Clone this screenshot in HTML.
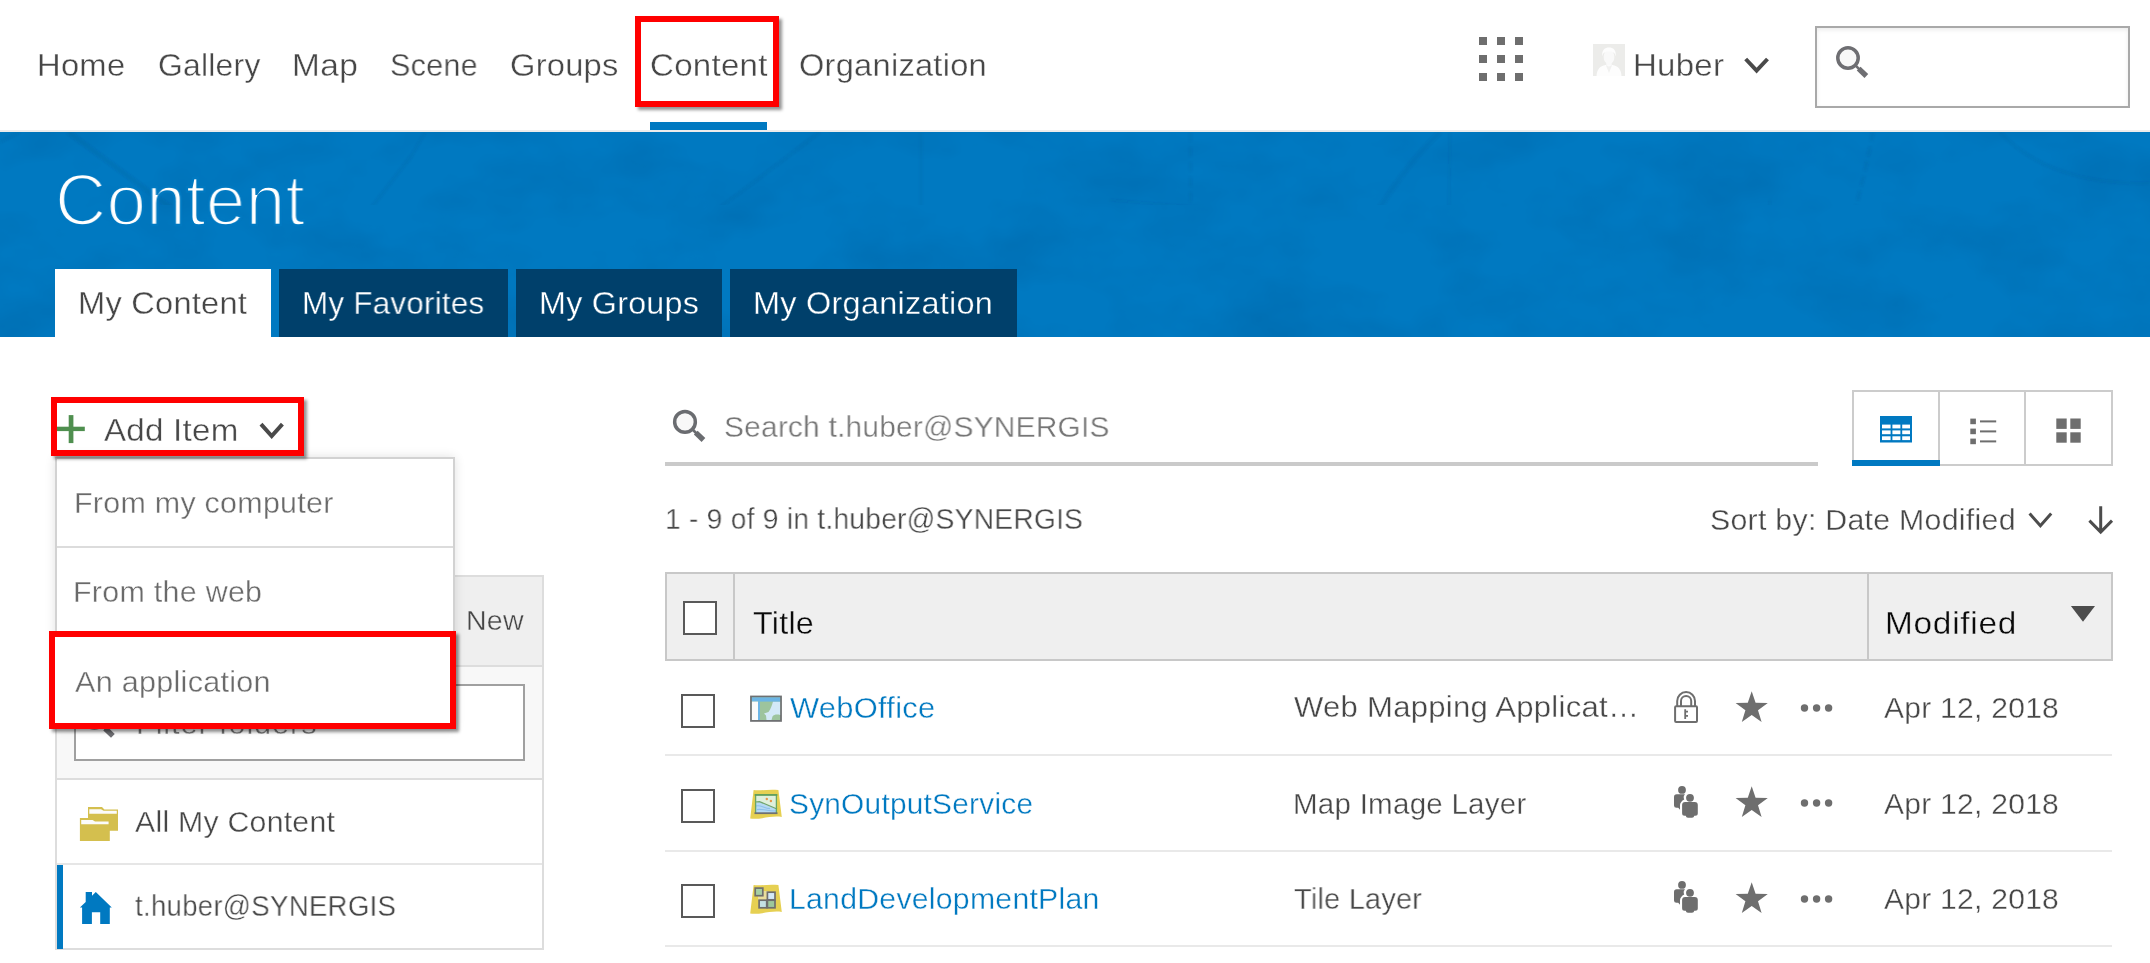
<!DOCTYPE html>
<html lang="en">
<head>
<meta charset="utf-8">
<title>Content</title>
<style>
html,body{margin:0;padding:0;}
body{width:2150px;height:963px;overflow:hidden;background:#fff;position:relative;
  font-family:"Liberation Sans",sans-serif;}
.a{position:absolute;box-sizing:border-box;}
.t{position:absolute;white-space:nowrap;line-height:0;transform-origin:0 0;will-change:transform;font-family:"Liberation Sans",sans-serif;}
svg{position:absolute;overflow:visible;}
/* header */
#hdrline{left:0;top:130px;width:2150px;height:2px;background:#ececec;}
#navul{left:650px;top:122px;width:117px;height:8px;background:#0079c1;}
.gd{width:8px;height:8px;background:#6e6e6e;}
#avatar{left:1593px;top:44px;width:32px;height:32px;background:#ececea;overflow:hidden;}
#gsearch{left:1815px;top:26px;width:315px;height:82px;border:2px solid #a9a9a9;background:#fff;
  box-shadow:inset 0 2px 4px rgba(0,0,0,.08);}
/* banner */
#banner{left:0;top:132px;width:2150px;height:205px;background:#0079c1;overflow:hidden;}
.tab{top:269px;height:68px;background:#00406b;}
#tab1{left:55px;width:216px;background:#fff;}
#tab2{left:279px;width:229px;}
#tab3{left:516px;width:206px;}
#tab4{left:730px;width:287px;}
/* red annotation boxes */
.red{border:6px solid #f00;box-shadow:3px 3px 3px rgba(0,0,0,.42);z-index:25;}
#red1{left:635px;top:16px;width:144px;height:91px;}
#red2{left:51px;top:397px;width:253px;height:59px;}
#red3{left:49px;top:631px;width:407px;height:98px;background:#fff;}
/* dropdown */
#dd{left:55px;top:457px;width:400px;height:272px;background:#fff;border:2px solid #d2d2d2;
  box-shadow:0 0 10px rgba(0,0,0,.12);z-index:20;}
.ddl{left:57px;width:396px;height:2px;background:#dcdcdc;z-index:21;}
/* folder panel */
#fp{left:55px;top:575px;width:489px;height:375px;border:2px solid #ddd;background:#fff;}
#fph{left:57px;top:577px;width:485px;height:90px;background:#efefef;border-bottom:2px solid #ddd;}
#fpf{left:57px;top:667px;width:485px;height:113px;background:#f8f8f8;border-bottom:2px solid #ddd;}
#finput{left:74px;top:684px;width:451px;height:77px;border:2px solid #a0a0a0;background:#fff;}
#fpd{left:57px;top:863px;width:485px;height:2px;background:#e6e6e6;}
#fpbar{left:57px;top:865px;width:6px;height:84px;background:#0079c1;}
/* search */
#sul{left:665px;top:462px;width:1153px;height:4px;background:#cacaca;}
#vs{left:1852px;top:390px;width:261px;height:76px;border:2px solid #ccc;background:#fff;}
.vsd{top:392px;width:2px;height:72px;background:#ccc;}
#vsa{left:1852px;top:460px;width:88px;height:6px;background:#0079c1;}
/* table */
#th{left:665px;top:572px;width:1448px;height:89px;background:#efefef;border:2px solid #c8c8c8;}
.thd{top:574px;width:2px;height:85px;background:#c8c8c8;}
.cb{width:34px;height:34px;border:2px solid #595959;background:#fff;}
.rl{left:665px;width:1447px;height:2px;background:#e9e9e9;}

</style>
</head>
<body>
<!-- ===== top navigation ===== -->
<div class="a" id="hdrline"></div>
<div class="a" id="navul"></div>
<div class="a gd" style="left:1479px;top:37px"></div><div class="a gd" style="left:1497px;top:37px"></div><div class="a gd" style="left:1515px;top:37px"></div>
<div class="a gd" style="left:1479px;top:55px"></div><div class="a gd" style="left:1497px;top:55px"></div><div class="a gd" style="left:1515px;top:55px"></div>
<div class="a gd" style="left:1479px;top:73px"></div><div class="a gd" style="left:1497px;top:73px"></div><div class="a gd" style="left:1515px;top:73px"></div>
<div class="a" id="avatar">
  <svg width="32" height="32" viewBox="0 0 32 32" style="left:0;top:0">
    <path d="M3.5 32 C4 25 7 22 12.5 21 L19.5 21 C25 22 28 25 28.5 32 Z" fill="#fdfdfd"/>
    <path d="M13.3 17 H18.7 V21.5 H13.3 Z" fill="#f9f9f9"/>
    <path d="M12.8 21 L16 29 L19.2 21 L16 22.4 Z" fill="#f1f1f0"/>
    <ellipse cx="16" cy="13" rx="5.4" ry="7" fill="#f9f9f9"/>
    <path d="M9.3 12.5 C8.5 6 12 3.6 16 3.6 C20 3.6 23.5 6 22.7 12.5 C22 9 20.5 7.6 16 7.6 C11.5 7.6 10 9 9.3 12.5 Z" fill="#fdfdfd"/>
  </svg>
</div>
<svg width="30" height="22" viewBox="1742 55 30 22" style="left:1742px;top:55px">
  <polyline points="1745.7,59 1756.6,70.6 1767.5,59" fill="none" stroke="#4a4a4a" stroke-width="4"/>
</svg>
<div class="a" id="gsearch"></div>
<svg width="40" height="40" viewBox="1832 42 40 40" style="left:1832px;top:42px">
  <circle cx="1848" cy="58" r="10.2" fill="#f8f8f8" stroke="#6e6e72" stroke-width="3.5"/>
  <line x1="1855.95" y1="65.95" x2="1859.45" y2="69.45" stroke="#6e6e72" stroke-width="2.6"/>
  <line x1="1858.65" y1="68.65" x2="1866.35" y2="76.05" stroke="#6e6e72" stroke-width="5.4"/>
</svg>

<!-- ===== banner ===== -->
<div class="a" id="banner">
  <svg width="2150" height="205" viewBox="0 132 2150 205" style="left:0;top:0">
    <defs><filter id="mottle" x="0" y="0" width="100%" height="100%" color-interpolation-filters="sRGB">
      <feTurbulence type="fractalNoise" baseFrequency="0.009 0.014" numOctaves="4" seed="11"/>
      <feColorMatrix type="matrix" values="0 0 0 0 0  0 0 0 0 0.22  0 0 0 0 0.42  0.3 0 0 0 -0.125"/>
    </filter><filter id="soft" x="0" y="0" width="100%" height="100%" filterUnits="userSpaceOnUse"><feGaussianBlur stdDeviation="1.3"/></filter></defs>
    <rect x="0" y="132" width="2150" height="205" filter="url(#mottle)"/>
    <g fill="none" stroke="#003f70" stroke-opacity=".09" stroke-width="3" filter="url(#soft)">
      <path d="M0 142 L20 132"/>
      <path d="M425 132 L412 155 L345 242 L318 269"/>
      <path d="M68 132 L254 269" stroke-opacity=".12" stroke-width="5"/>
      <path d="M445 219 C455 235 462 250 469 269"/>
      <path d="M820 132 L640 268"/>
      <path d="M921 132 V337"/>
      <path d="M1190.6 132 V337" stroke-dasharray="10 5"/>
      <path d="M1440 132 C1400 170 1372 220 1366 232 C1350 270 1342 300 1336 337" stroke-width="5"/>
      <path d="M1873 132 C1860 200 1840 270 1812 337" stroke-dasharray="10 5" stroke-width="4"/>
      <path d="M2000 132 C2030 165 2080 185 2150 183"/>
      <path d="M1110 200 C1300 215 1600 240 2150 285" stroke-width="2"/>
      <path d="M1450 132 L1447 337" stroke-width="2"/>
      <path d="M1770 200 L1760 337" stroke-width="2"/>
      <path d="M1340 290 C1500 300 1800 330 2150 337" stroke-width="2"/>
    </g>
  </svg>
</div>
<div class="a tab" id="tab1"></div>
<div class="a tab" id="tab2"></div>
<div class="a tab" id="tab3"></div>
<div class="a tab" id="tab4"></div>

<!-- ===== left column: folder panel (partly hidden behind dropdown) ===== -->
<div class="a" id="fp"></div>
<div class="a" id="fph"></div>
<div class="a" id="fpf"></div>
<div class="a" id="finput"></div>
<svg width="40" height="40" viewBox="78 702 40 40" style="left:78px;top:702px">
  <circle cx="94.4" cy="717.7" r="10.35" fill="#f8f8f8" stroke="#6e6e72" stroke-width="3.5"/>
  <line x1="102.46" y1="725.76" x2="105.96" y2="729.26" stroke="#6e6e72" stroke-width="2.6"/>
  <line x1="105.16" y1="728.46" x2="112.86" y2="735.86" stroke="#6e6e72" stroke-width="5.4"/>
</svg>
<div class="a" id="fpd"></div>
<div class="a" id="fpbar"></div>
<!-- folders icon -->
<svg width="42" height="36" viewBox="78 806 42 36" style="left:78px;top:806px">
  <path d="M88 807.1 H102 L104.4 809.5 H118 V830.8 H88 Z" fill="#d4bf4e"/>
  <path d="M89.3 809.3 H101 L103.6 810.7 H116.8 V813.7 H89.3 Z" fill="#fbfbfb"/>
  <path d="M79.9 818 H93.5 L95.5 820.4 H109.8 V840.9 H79.9 Z" fill="#d4bf4e"/>
  <path d="M81.2 820.1 H92.6 L95 821.5 H108.6 V824.3 H81.2 Z" fill="#fbfbfb"/>
</svg>
<!-- home icon -->
<svg width="36" height="36" viewBox="78 890 36 36" style="left:78px;top:890px">
  <path d="M95.8 892 L111.8 907.6 H109.8 V923.9 H100.2 V912.2 H91.9 V923.9 H82.1 V907.6 H79.9 L85.7 902 V892 H92 V895.8 Z" fill="#0079c1"/>
</svg>

<!-- ===== Add Item + dropdown ===== -->
<svg width="34" height="34" viewBox="54 412 34 34" style="left:54px;top:412px;z-index:24">
  <rect x="68.7" y="415.1" width="4.7" height="28" fill="#4f8f4f"/>
  <rect x="54" y="426.7" width="30.8" height="4.4" fill="#4f8f4f"/>
</svg>
<svg width="30" height="22" viewBox="257 420 30 22" style="left:257px;top:420px;z-index:24">
  <polyline points="261,424.2 271.7,436 282.4,424.2" fill="none" stroke="#4a4a4a" stroke-width="4"/>
</svg>
<div class="a" id="dd"></div>
<div class="a ddl" style="top:546px"></div>
<div class="a red" id="red1"></div>
<div class="a red" id="red2"></div>
<div class="a red" id="red3"></div>

<!-- ===== right column: search + view switcher ===== -->
<svg width="40" height="40" viewBox="670 407 40 40" style="left:670px;top:407px">
  <circle cx="685" cy="421.9" r="10.35" fill="#f8f8f8" stroke="#6a6c70" stroke-width="3.5"/>
  <line x1="693.06" y1="429.96" x2="696.56" y2="433.46" stroke="#6a6c70" stroke-width="2.6"/>
  <line x1="695.76" y1="432.66" x2="703.46" y2="440.06" stroke="#6a6c70" stroke-width="5.4"/>
</svg>
<div class="a" id="sul"></div>
<div class="a" id="vs"></div>
<div class="a vsd" style="left:1938px"></div>
<div class="a vsd" style="left:2024px"></div>
<div class="a" id="vsa"></div>
<!-- table-view icon -->
<svg width="32" height="27" viewBox="0 0 32 27" style="left:1880px;top:416px">
  <rect x="0" y="0" width="32" height="26.5" fill="#0079c1"/>
  <g fill="#fff">
    <rect x="2" y="8.6" width="8.6" height="3.8"/><rect x="12.4" y="8.6" width="8" height="3.8"/><rect x="22.2" y="8.6" width="7.8" height="3.8"/>
    <rect x="2" y="14.4" width="8.6" height="3.8"/><rect x="12.4" y="14.4" width="8" height="3.8"/><rect x="22.2" y="14.4" width="7.8" height="3.8"/>
    <rect x="2" y="20.3" width="8.6" height="3.8"/><rect x="12.4" y="20.3" width="8" height="3.8"/><rect x="22.2" y="20.3" width="7.8" height="3.8"/>
  </g>
</svg>
<!-- list-view icon -->
<svg width="28" height="28" viewBox="1970 417 28 28" style="left:1970px;top:417px">
  <g fill="#6e6e6e">
    <rect x="1970.3" y="418.6" width="5.6" height="5.6"/><rect x="1970.3" y="428.6" width="5.6" height="5.6"/><rect x="1970.3" y="438.6" width="5.6" height="5.6"/>
    <rect x="1980" y="420.4" width="16.2" height="2"/><rect x="1980" y="430.4" width="16.2" height="2"/><rect x="1980" y="440.4" width="16.2" height="2"/>
  </g>
</svg>
<!-- grid-view icon -->
<svg width="26" height="26" viewBox="2056 418 26 26" style="left:2056px;top:418px">
  <g fill="#6e6e6e">
    <rect x="2056.3" y="418.5" width="10.4" height="10.4"/><rect x="2070.3" y="418.5" width="10.4" height="10.4"/>
    <rect x="2056.3" y="432.3" width="10.4" height="10.4"/><rect x="2070.3" y="432.3" width="10.4" height="10.4"/>
  </g>
</svg>
<!-- sort chevron + arrow -->
<svg width="28" height="20" viewBox="2026 510 28 20" style="left:2026px;top:510px">
  <polyline points="2029.6,513.5 2040.4,525.8 2051.2,513.5" fill="none" stroke="#4c4c4c" stroke-width="3"/>
</svg>
<svg width="30" height="32" viewBox="2086 504 30 32" style="left:2086px;top:504px">
  <path d="M2100.7 506.2 V531.5 M2089.4 520.6 L2100.7 532 L2112 520.6" fill="none" stroke="#4c4c4c" stroke-width="3"/>
</svg>

<!-- ===== table ===== -->
<div class="a" id="th"></div>
<div class="a thd" style="left:733px"></div>
<div class="a thd" style="left:1867px"></div>
<div class="a cb" style="left:683px;top:601px"></div>
<svg width="26" height="18" viewBox="2070 605 26 18" style="left:2070px;top:605px">
  <polygon points="2070.9,605.9 2095,605.9 2083,621.8" fill="#4c4c4c"/>
</svg>
<div class="a cb" style="left:681px;top:694px"></div>
<div class="a cb" style="left:681px;top:789px"></div>
<div class="a cb" style="left:681px;top:884px"></div>
<div class="a rl" style="top:754px"></div>
<div class="a rl" style="top:850px"></div>
<div class="a rl" style="top:945px"></div>

<!-- row 1 icon: web mapping application -->
<svg width="32" height="27" viewBox="750 695 32 27" style="left:750px;top:695px">
  <rect x="751" y="696.5" width="30" height="24.4" fill="#9dc49d" stroke="#6e7072" stroke-width="1.8"/>
  <path d="M773 701.6 H780.1 V715 C777 714 774 714.5 772.5 716.5 L771.5 720 H766.5 L766 715.5 L764 713.5 L768.5 712 C771 709 772 705 773 701.6 Z" fill="#d3e9f7"/>
  <rect x="751.9" y="697.4" width="28.2" height="4.2" fill="#6cb5e5"/>
  <rect x="751.9" y="701.6" width="6.1" height="18.4" fill="#fafafa"/>
  <rect x="758" y="701.6" width="2" height="18.4" fill="#6cb5e5"/>
</svg>
<!-- row 2 icon: map image layer -->
<svg width="34" height="32" viewBox="749 788 34 32" style="left:749px;top:788px">
  <path d="M753.6 790 C760 791 768 789 778.4 790 L781.8 817 C772 815 760 820 750.2 818.6 Z" fill="#e6d052"/>
  <rect x="755" y="794.2" width="22" height="19.2" fill="#dff0dc"/>
  <path d="M755 803.4 L759.5 801.8 L777 809.6 V813 H755 Z" fill="#b5d9f3"/>
  <path d="M756 806 C760 804.5 764 808 770 808.6 M757 809.6 C762 808.4 768 811.4 776 811" fill="none" stroke="#8cc0ea" stroke-width="1.1"/>
  <path d="M755 802 L759.5 801.6 L777 809" fill="none" stroke="#6fa46c" stroke-width="1.2"/>
  <path d="M755.6 813 V794.9 H776.4 V813" fill="none" stroke="#6aa565" stroke-width="1.3"/>
  <path d="M754.6 794.9 H777.4" stroke="#5f9c5a" stroke-width="1.6"/>
  <path d="M754.5 813.2 H777.5" stroke="#6e7072" stroke-width="1.8"/>
  <circle cx="766.8" cy="799" r="1.2" fill="#e8954a"/><circle cx="770.9" cy="801" r="1.2" fill="#e8954a"/>
</svg>
<!-- row 3 icon: tile layer -->
<svg width="34" height="32" viewBox="749 883 34 32" style="left:749px;top:883px">
  <path d="M753.6 885 C760 886 768 884 778.4 885 L781.8 912 C772 910 760 915 750.2 913.6 Z" fill="#e6d052"/>
  <rect x="758" y="891" width="10" height="9" fill="#e9de9c"/>
  <g stroke="#6e6e6e" stroke-width="1.7">
    <rect x="755.2" y="888.1" width="7.6" height="7.6" fill="#a6cfa4"/>
    <rect x="767.4" y="892.2" width="7.6" height="7.6" fill="#d3e9f7"/>
    <rect x="759.1" y="900.2" width="7.6" height="7.6" fill="#c4e0e4"/>
    <rect x="767.4" y="900.2" width="7.6" height="7.6" fill="#9dc79b"/>
  </g>
</svg>

<!-- row 1: lock -->
<svg width="28" height="36" viewBox="1672 689 28 36" style="left:1672px;top:689px">
  <g fill="none" stroke="#6e6e6e" stroke-width="2">
    <rect x="1675.1" y="706.2" width="21.9" height="15.7" rx="1"/>
    <path d="M1677.2 706 V701 A8.9 8.9 0 0 1 1695 701 V706"/>
    <path d="M1681 706 V701 A5.1 5.1 0 0 1 1691.2 701 V706"/>
    <path d="M1685.2 709.2 V718.9 M1685.2 711.6 H1688 M1685.2 715.8 H1688" stroke-width="1.8"/>
  </g>
</svg>
<!-- people icons -->
<svg width="28" height="34" viewBox="1672 785 28 34" style="left:1672px;top:785px">
  <g fill="#6e6e6e">
    <circle cx="1682" cy="789.9" r="3.9"/>
    <path d="M1674 797 Q1674 794.3 1676.7 794.3 H1685 L1683.8 796 Q1683.4 798.5 1684.2 799.5 Q1680.4 801.5 1680 805 V809.8 L1678.2 807.8 H1676.5 Q1674 807.8 1674 805.5 Z"/>
    <circle cx="1690" cy="797.8" r="3.9"/>
    <path d="M1682.1 805 Q1682.1 801.9 1685.2 801.9 H1694.7 Q1697.8 801.9 1697.8 805 V813.3 Q1697.8 815.8 1695.3 815.8 H1694.3 Q1694 817.8 1692 817.8 H1688 Q1686 817.8 1685.8 815.8 H1684.6 Q1682.1 815.8 1682.1 813.3 Z"/>
  </g>
</svg>
<svg width="28" height="34" viewBox="1672 785 28 34" style="left:1672px;top:880.4px">
  <g fill="#6e6e6e">
    <circle cx="1682" cy="789.9" r="3.9"/>
    <path d="M1674 797 Q1674 794.3 1676.7 794.3 H1685 L1683.8 796 Q1683.4 798.5 1684.2 799.5 Q1680.4 801.5 1680 805 V809.8 L1678.2 807.8 H1676.5 Q1674 807.8 1674 805.5 Z"/>
    <circle cx="1690" cy="797.8" r="3.9"/>
    <path d="M1682.1 805 Q1682.1 801.9 1685.2 801.9 H1694.7 Q1697.8 801.9 1697.8 805 V813.3 Q1697.8 815.8 1695.3 815.8 H1694.3 Q1694 817.8 1692 817.8 H1688 Q1686 817.8 1685.8 815.8 H1684.6 Q1682.1 815.8 1682.1 813.3 Z"/>
  </g>
</svg>
<!-- stars + more dots -->
<svg width="34" height="33" viewBox="1735 690 34 33" style="left:1735px;top:690px"><polygon points="1751.7,691.2 1755.6,702.8 1767.8,703 1758,710.3 1761.6,722 1751.7,715 1741.8,722 1745.4,710.3 1735.6,703 1747.8,702.8" fill="#6e6e6e"/></svg>
<svg width="34" height="33" viewBox="1735 690 34 33" style="left:1735px;top:785.4px"><polygon points="1751.7,691.2 1755.6,702.8 1767.8,703 1758,710.3 1761.6,722 1751.7,715 1741.8,722 1745.4,710.3 1735.6,703 1747.8,702.8" fill="#6e6e6e"/></svg>
<svg width="34" height="33" viewBox="1735 690 34 33" style="left:1735px;top:880.8px"><polygon points="1751.7,691.2 1755.6,702.8 1767.8,703 1758,710.3 1761.6,722 1751.7,715 1741.8,722 1745.4,710.3 1735.6,703 1747.8,702.8" fill="#6e6e6e"/></svg>
<svg width="36" height="10" viewBox="1799 702 36 10" style="left:1799px;top:703px"><g fill="#6e6e6e"><circle cx="1804.5" cy="707" r="3.7"/><circle cx="1816.6" cy="707" r="3.7"/><circle cx="1828.6" cy="707" r="3.7"/></g></svg>
<svg width="36" height="10" viewBox="1799 702 36 10" style="left:1799px;top:798.4px"><g fill="#6e6e6e"><circle cx="1804.5" cy="707" r="3.7"/><circle cx="1816.6" cy="707" r="3.7"/><circle cx="1828.6" cy="707" r="3.7"/></g></svg>
<svg width="36" height="10" viewBox="1799 702 36 10" style="left:1799px;top:893.8px"><g fill="#6e6e6e"><circle cx="1804.5" cy="707" r="3.7"/><circle cx="1816.6" cy="707" r="3.7"/><circle cx="1828.6" cy="707" r="3.7"/></g></svg>

<!-- ===== all text ===== -->
<span class="t" style="left:37.44px;top:65.36px;font-size:31.5px;letter-spacing:0.250px;color:#474747;-webkit-text-stroke:0.35px #ffffff;transform:scaleX(1.0391);">Home</span>
<span class="t" style="left:157.60px;top:65.36px;font-size:31.5px;letter-spacing:0.250px;color:#474747;-webkit-text-stroke:0.35px #ffffff;transform:scaleX(1.0104);">Gallery</span>
<span class="t" style="left:291.59px;top:65.36px;font-size:31.5px;letter-spacing:0.418px;color:#474747;-webkit-text-stroke:0.35px #ffffff;transform:scaleX(1.0600);">Map</span>
<span class="t" style="left:389.84px;top:65.36px;font-size:31.5px;letter-spacing:0.250px;color:#474747;-webkit-text-stroke:0.35px #ffffff;transform:scaleX(0.9704);">Scene</span>
<span class="t" style="left:509.58px;top:65.36px;font-size:31.5px;letter-spacing:0.250px;color:#474747;-webkit-text-stroke:0.35px #ffffff;transform:scaleX(1.0357);">Groups</span>
<span class="t" style="left:649.57px;top:65.36px;font-size:31.5px;letter-spacing:0.250px;color:#474747;z-index:30;-webkit-text-stroke:0.35px #ffffff;transform:scaleX(1.0495);">Content</span>
<span class="t" style="left:798.98px;top:65.36px;font-size:31.5px;letter-spacing:0.250px;color:#474747;-webkit-text-stroke:0.35px #ffffff;transform:scaleX(1.0349);">Organization</span>
<span class="t" style="left:1632.72px;top:65.46px;font-size:31.5px;letter-spacing:0.250px;color:#474747;-webkit-text-stroke:0.35px #ffffff;transform:scaleX(1.0482);">Huber</span>
<span class="t" style="left:54.67px;top:200.45px;font-size:72px;letter-spacing:0.250px;color:#ffffff;-webkit-text-stroke:2.4px #0079c1;transform:scaleX(0.9855);">Content</span>
<span class="t" style="left:78.25px;top:303.36px;font-size:31.5px;letter-spacing:0.250px;color:#474747;-webkit-text-stroke:0.35px #ffffff;transform:scaleX(1.0341);">My Content</span>
<span class="t" style="left:302.22px;top:303.36px;font-size:31.5px;letter-spacing:0.250px;color:#ffffff;-webkit-text-stroke:0.35px #00406b;transform:scaleX(0.9955);">My Favorites</span>
<span class="t" style="left:538.77px;top:303.36px;font-size:31.5px;letter-spacing:0.250px;color:#ffffff;-webkit-text-stroke:0.35px #00406b;transform:scaleX(1.0247);">My Groups</span>
<span class="t" style="left:753.45px;top:303.36px;font-size:31.5px;letter-spacing:0.250px;color:#ffffff;-webkit-text-stroke:0.35px #00406b;transform:scaleX(1.0303);">My Organization</span>
<span class="t" style="left:104.21px;top:429.79px;font-size:32px;letter-spacing:0.250px;color:#474747;z-index:30;-webkit-text-stroke:0.35px #ffffff;transform:scaleX(1.0337);">Add Item</span>
<span class="t" style="left:73.52px;top:502.83px;font-size:29px;letter-spacing:0.250px;color:#6a6a6a;z-index:22;-webkit-text-stroke:0.35px #ffffff;transform:scaleX(1.0496);">From my computer</span>
<span class="t" style="left:73.31px;top:592.03px;font-size:29px;letter-spacing:0.250px;color:#6a6a6a;z-index:22;-webkit-text-stroke:0.35px #ffffff;transform:scaleX(1.0501);">From the web</span>
<span class="t" style="left:74.91px;top:682.03px;font-size:29px;letter-spacing:0.250px;color:#6a6a6a;z-index:30;-webkit-text-stroke:0.35px #ffffff;transform:scaleX(1.0546);">An application</span>
<span class="t" style="left:466.24px;top:621.45px;font-size:27.5px;letter-spacing:0.250px;color:#474747;-webkit-text-stroke:0.35px #efefef;transform:scaleX(1.0376);">New</span>
<span class="t" style="left:136.19px;top:724.13px;font-size:29px;letter-spacing:0.828px;color:#757575;-webkit-text-stroke:0.35px #ffffff;transform:scaleX(1.0600);">Filter folders</span>
<span class="t" style="left:135.21px;top:822.08px;font-size:30px;letter-spacing:0.250px;color:#474747;-webkit-text-stroke:0.35px #ffffff;transform:scaleX(1.0080);">All My Content</span>
<span class="t" style="left:135.21px;top:906.35px;font-size:29.5px;letter-spacing:0.250px;color:#474747;-webkit-text-stroke:0.35px #ffffff;transform:scaleX(0.9389);">t.huber@SYNERGIS</span>
<span class="t" style="left:724.22px;top:426.58px;font-size:30px;letter-spacing:0.250px;color:#767676;-webkit-text-stroke:0.35px #ffffff;transform:scaleX(0.9938);">Search t.huber@SYNERGIS</span>
<span class="t" style="left:664.90px;top:518.95px;font-size:29.5px;letter-spacing:0.250px;color:#474747;-webkit-text-stroke:0.35px #ffffff;transform:scaleX(0.9558);">1 - 9 of 9 in t.huber@SYNERGIS</span>
<span class="t" style="left:1710.19px;top:519.75px;font-size:29.5px;letter-spacing:0.250px;color:#474747;-webkit-text-stroke:0.35px #ffffff;transform:scaleX(1.0284);">Sort by: Date Modified</span>
<span class="t" style="left:752.61px;top:622.96px;font-size:31.5px;letter-spacing:0.250px;color:#0a0a0a;-webkit-text-stroke:0.35px #efefef;transform:scaleX(1.0247);">Title</span>
<span class="t" style="left:1884.89px;top:623.16px;font-size:31.5px;letter-spacing:0.700px;color:#0a0a0a;-webkit-text-stroke:0.35px #efefef;transform:scaleX(1.0600);">Modified</span>
<span class="t" style="left:790.01px;top:707.85px;font-size:29.5px;letter-spacing:0.250px;color:#0079c1;-webkit-text-stroke:0.35px #ffffff;transform:scaleX(1.0473);">WebOffice</span>
<span class="t" style="left:789.00px;top:803.65px;font-size:29.5px;letter-spacing:0.250px;color:#0079c1;-webkit-text-stroke:0.35px #ffffff;transform:scaleX(1.0103);">SynOutputService</span>
<span class="t" style="left:789.07px;top:899.05px;font-size:29.5px;letter-spacing:0.250px;color:#0079c1;-webkit-text-stroke:0.35px #ffffff;transform:scaleX(1.0243);">LandDevelopmentPlan</span>
<span class="t" style="left:1294.41px;top:707.45px;font-size:29.5px;letter-spacing:0.250px;color:#474747;-webkit-text-stroke:0.35px #ffffff;transform:scaleX(1.0533);">Web Mapping Applicat…</span>
<span class="t" style="left:1293.41px;top:803.65px;font-size:29.5px;letter-spacing:0.250px;color:#474747;-webkit-text-stroke:0.35px #ffffff;transform:scaleX(1.0010);">Map Image Layer</span>
<span class="t" style="left:1294.41px;top:898.95px;font-size:29.5px;letter-spacing:0.250px;color:#474747;-webkit-text-stroke:0.35px #ffffff;transform:scaleX(0.9787);">Tile Layer</span>
<span class="t" style="left:1883.81px;top:708.35px;font-size:29.5px;letter-spacing:0.250px;color:#474747;-webkit-text-stroke:0.35px #ffffff;transform:scaleX(1.0181);">Apr 12, 2018</span>
<span class="t" style="left:1883.81px;top:803.65px;font-size:29.5px;letter-spacing:0.250px;color:#474747;-webkit-text-stroke:0.35px #ffffff;transform:scaleX(1.0181);">Apr 12, 2018</span>
<span class="t" style="left:1883.81px;top:898.95px;font-size:29.5px;letter-spacing:0.250px;color:#474747;-webkit-text-stroke:0.35px #ffffff;transform:scaleX(1.0181);">Apr 12, 2018</span>

</body>
</html>
